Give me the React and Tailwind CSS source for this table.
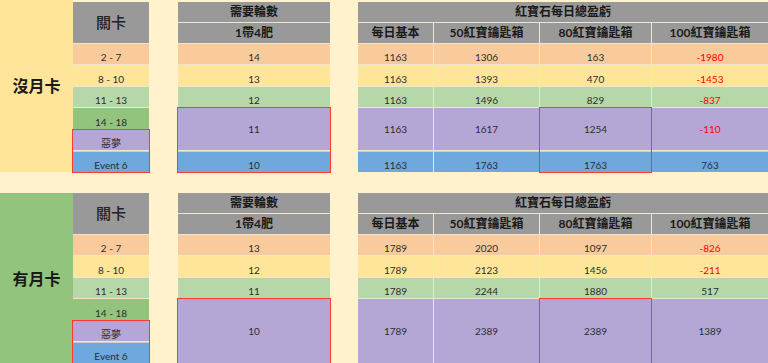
const C = {
  gray: 'bg-[#999999]',
  orange: 'bg-[#f9cb9c]',
  yellow: 'bg-[#ffe599]',
  lgreen: 'bg-[#b6d7a8]',
  green: 'bg-[#93c47d]',
  purple: 'bg-[#b4a7d6]',
  blue: 'bg-[#6fa8dc] shadow-[inset_0_1px_0_#cfcad6]',
};

const ROW = { 1: 'row-start-1', 2: 'row-start-2', 3: 'row-start-3', 4: 'row-start-4', 5: 'row-start-5', 6: 'row-start-6', 7: 'row-start-7', 8: 'row-start-8' };
const SPAN = { 1: 'row-span-1', 2: 'row-span-2', 3: 'row-span-3' };
const COL = { 1: 'col-start-1', 2: 'col-start-2', 3: 'col-start-3', 4: 'col-start-4' };

const rowsTpl = 'grid-rows-[20px_20px_20px_21px_20px_21px_20px_21px]';

const stages = [
  { label: '2 - 7', color: C.orange },
  { label: '8 - 10', color: C.yellow },
  { label: '11 - 13', color: C.lgreen },
  { label: '14 - 18', color: C.green },
  { label: '惡夢', color: C.purple },
  { label: 'Event 6', color: C.blue },
];

const blocks = [
  {
    title: '沒月卡',
    titleBg: C.yellow,
    rounds: [
      { v: 14, row: 3, span: 1, color: C.orange },
      { v: 13, row: 4, span: 1, color: C.yellow },
      { v: 12, row: 5, span: 1, color: C.lgreen },
      { v: 11, row: 6, span: 2, color: C.purple },
      { v: 10, row: 8, span: 1, color: C.blue },
    ],
    profit: [
      { vals: [1163, 1306, 163, -1980], row: 3, span: 1, color: C.orange },
      { vals: [1163, 1393, 470, -1453], row: 4, span: 1, color: C.yellow },
      { vals: [1163, 1496, 829, -837], row: 5, span: 1, color: C.lgreen },
      { vals: [1163, 1617, 1254, -110], row: 6, span: 2, color: C.purple },
      { vals: [1163, 1763, 1763, 763], row: 8, span: 1, color: C.blue },
    ],
  },
  {
    title: '有月卡',
    titleBg: C.green,
    rounds: [
      { v: 13, row: 3, span: 1, color: C.orange },
      { v: 12, row: 4, span: 1, color: C.yellow },
      { v: 11, row: 5, span: 1, color: C.lgreen },
      { v: 10, row: 6, span: 3, color: C.purple },
    ],
    profit: [
      { vals: [1789, 2020, 1097, -826], row: 3, span: 1, color: C.orange },
      { vals: [1789, 2123, 1456, -211], row: 4, span: 1, color: C.yellow },
      { vals: [1789, 2244, 1880, 517], row: 5, span: 1, color: C.lgreen },
      { vals: [1789, 2389, 2389, 1389], row: 6, span: 3, color: C.purple },
    ],
  },
];

const cols = ['每日基本', '50紅寶鑰匙箱', '80紅寶鑰匙箱', '100紅寶鑰匙箱'];

function Cell({ row, span = 1, col = 1, color, className = '', children }) {
  const align = span > 1 ? 'items-center' : 'items-end pb-[2px]';
  return (
    <div className={`${ROW[row]} ${SPAN[span]} ${COL[col]} ${color} flex justify-center ${align} text-[10px] text-[#2d2d2d] leading-none ${className}`}>
      {children}
    </div>
  );
}

// red highlight frame laid over the grid cells it covers
function RedBox({ row, span, col = 1 }) {
  return <div className={`${ROW[row]} ${SPAN[span]} ${COL[col]} relative z-10 -m-px border border-[#ff3b30] pointer-events-none`} />;
}

function Block({ data, first }) {
  return (
    <div className="flex h-[172px] shrink-0">
      <div className={`w-[73px] ${data.titleBg} flex items-center justify-center text-[16px] font-semibold text-[#1a1a1a]`}>
        {data.title}
      </div>

      <div className={`${first ? 'mt-[2px]' : ''} flex`}>
        {/* 關卡 */}
        <div className={`grid w-[76px] grid-cols-[76px] ${rowsTpl} gap-y-px bg-[#efe6cd]`}>
          <div className={`row-start-1 row-span-2 ${C.gray} flex items-center justify-center text-[15px] font-medium text-[#222]`}>關卡</div>
          {stages.map((s, i) => (
            <Cell key={s.label} row={i + 3} color={s.color}>{s.label}</Cell>
          ))}
          <RedBox row={7} span={2} />
        </div>

        {/* 需要輪數 */}
        <div className={`ml-[29px] grid w-[152px] grid-cols-[152px] ${rowsTpl} gap-y-px bg-[#efe6cd]`}>
          <div className={`row-start-1 ${C.gray} flex items-center justify-center text-[12px] font-bold text-[#1a1a1a]`}>需要輪數</div>
          <div className={`row-start-2 ${C.gray} flex items-center justify-center text-[12px] font-bold text-[#1a1a1a]`}>1帶4肥</div>
          {data.rounds.map((r) => (
            <Cell key={r.row} row={r.row} span={r.span} color={r.color}>{r.v}</Cell>
          ))}
          <RedBox row={6} span={3} />
        </div>

        {/* 紅寶石每日總盈虧 */}
        <div className={`ml-[28px] grid w-[410px] grid-cols-[75px_105px_111px_1fr] ${rowsTpl} gap-px bg-[#efe6cd]`}>
          <div className={`row-start-1 col-span-4 ${C.gray} flex items-center justify-center text-[12px] font-bold text-[#1a1a1a]`}>紅寶石每日總盈虧</div>
          {cols.map((c, i) => (
            <div key={c} className={`row-start-2 ${COL[i + 1]} ${C.gray} flex items-end justify-center pb-[1px] text-[12px] font-bold text-[#1a1a1a]`}>{c}</div>
          ))}
          {data.profit.map((r) =>
            r.vals.map((v, i) => (
              <Cell key={`${r.row}-${i}`} row={r.row} span={r.span} col={i + 1} color={r.color} className={v < 0 ? '!text-[#ff0000]' : ''}>
                {v}
              </Cell>
            ))
          )}
          <RedBox row={6} span={3} col={3} />
        </div>
      </div>
    </div>
  );
}

export default function App() {
  return (
    <div className="w-[768px] h-[363px] overflow-hidden bg-[#fff2cc] flex flex-col gap-[21px] font-['Lato','Noto_Sans_CJK_TC',sans-serif]">
      <Block data={blocks[0]} first />
      <Block data={blocks[1]} />
    </div>
  );
}
